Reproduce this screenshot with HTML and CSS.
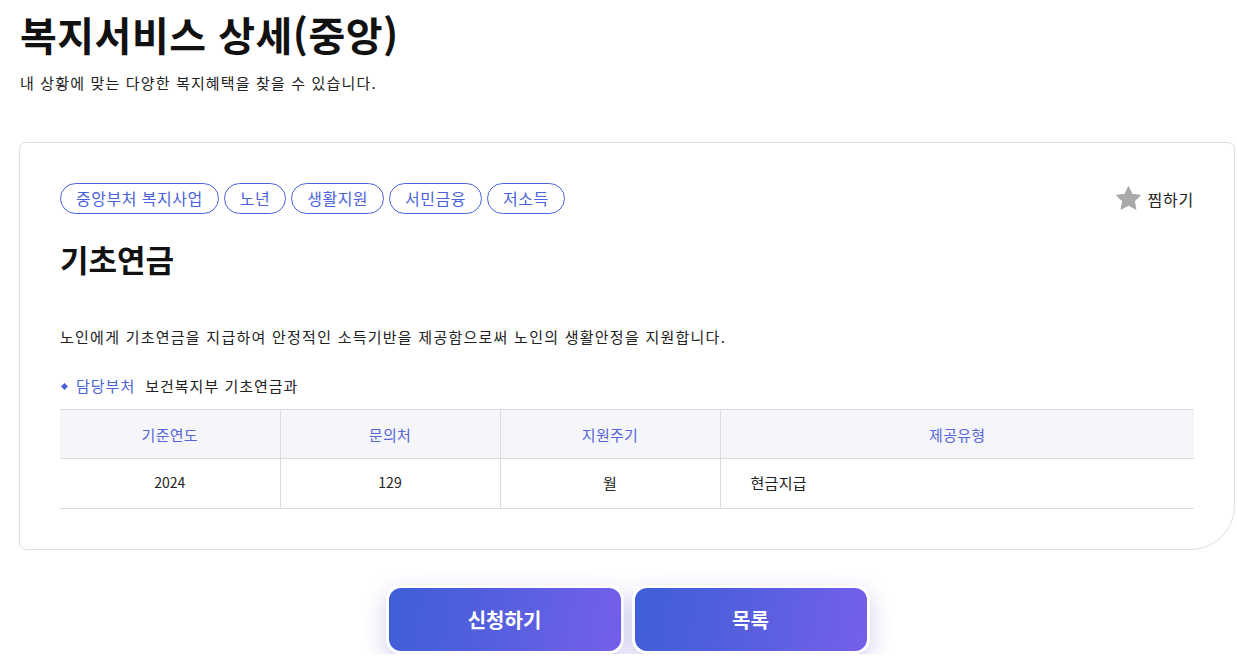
FILE: index.html
```html
<!DOCTYPE html>
<html lang="ko">
<head>
<meta charset="utf-8">
<link rel="stylesheet" href="styles.css">
</head>
<body>
<div class="page">
  <header class="page-head">
    <h1 class="page-title">복지서비스 상세(중앙)</h1>
    <p class="page-sub">내 상황에 맞는 다양한 복지혜택을 찾을 수 있습니다.</p>
  </header>

  <section class="card">
    <div class="card-top">
      <ul class="tags">
        <li class="tag">중앙부처 복지사업</li>
        <li class="tag">노년</li>
        <li class="tag">생활지원</li>
        <li class="tag">서민금융</li>
        <li class="tag">저소득</li>
      </ul>
      <button class="fav">
        <svg class="fav-icon" viewBox="0 0 24 24" width="27" height="27"><path d="M12 1.8l3.1 6.6 7.1.9-5.2 4.9 1.4 7.1L12 17.8l-6.4 3.5 1.4-7.1L1.8 9.3l7.1-.9z" fill="#a9a9a9" stroke="#a9a9a9" stroke-width="1.2" stroke-linejoin="round"/></svg>
        <span>찜하기</span>
      </button>
    </div>
    <h2 class="svc-title">기초연금</h2>
    <p class="svc-desc">노인에게 기초연금을 지급하여 안정적인 소득기반을 제공함으로써 노인의 생활안정을 지원합니다.</p>
    <p class="dept"><span class="dept-label">담당부처</span><span class="dept-value">보건복지부 기초연금과</span></p>
    <table class="info">
      <thead>
        <tr><th>기준연도</th><th>문의처</th><th>지원주기</th><th>제공유형</th></tr>
      </thead>
      <tbody>
        <tr><td>2024</td><td>129</td><td class="ko">월</td><td class="ko left">현금지급</td></tr>
      </tbody>
    </table>
  </section>

  <div class="actions">
    <button class="btn">신청하기</button>
    <button class="btn">목록</button>
  </div>
</div>
</body>
</html>
```

FILE: styles.css
```css
* { box-sizing: border-box; }
html, body { margin: 0; padding: 0; background: #fff; }
body {
  font-family: "Noto Sans CJK KR", "Noto Sans", sans-serif;
  color: #111;
}
.page {
  width: 1216px;
  margin-left: 19px;
}
.page-head { padding-top: 6px; }
.page-title {
  margin: 0;
  font-size: 40px;
  font-weight: 700;
  letter-spacing: 0.5px;
  line-height: 56px;
  padding-left: 1px;
}
.page-sub {
  margin: 11px 0 0 1px;
  font-size: 15px;
  letter-spacing: 1.15px;
  line-height: 20px;
  color: #222;
}
.card {
  margin-top: 49px;
  border: 1px solid #dedede;
  border-radius: 7px 7px 44px 7px;
  padding: 40px 40px 40px 40px;
}
.card-top {
  display: flex;
  justify-content: space-between;
  align-items: center;
}
.tags {
  display: flex;
  gap: 5px;
  list-style: none;
  margin: 0;
  padding: 0;
}
.tag {
  height: 31px;
  border: 1px solid #4a63d9;
  border-radius: 16px;
  padding: 0 15px;
  font-size: 16px;
  letter-spacing: 0.5px;
  line-height: 29px;
  color: #4a63d9;
}
.fav {
  display: flex;
  align-items: center;
  gap: 5px;
  border: 0;
  background: none;
  padding: 0;
  font-family: inherit;
  font-size: 16px;
  letter-spacing: 0.8px;
  color: #222;
}
.svc-title {
  margin: 23px 0 0;
  font-size: 31px;
  font-weight: 700;
  letter-spacing: 0;
  line-height: 44px;
}
.svc-desc {
  margin: 45px 0 0;
  font-size: 15px;
  letter-spacing: 1.25px;
  line-height: 22px;
  color: #222;
}
.dept {
  display: flex;
  align-items: center;
  margin: 27px 0 0;
  font-size: 15px;
  letter-spacing: 1px;
  line-height: 22px;
}
.dept-label {
  position: relative;
  padding-left: 16px;
  color: #4a63d9;
  margin-right: 10px;
}
.dept-label::before {
  content: "";
  position: absolute;
  left: 2px;
  top: 9px;
  width: 5px;
  height: 5px;
  background: #4a63d9;
  transform: rotate(45deg);
}
.dept-value { color: #222; }
.info {
  width: 100%;
  margin-top: 12px;
  border-collapse: collapse;
  table-layout: fixed;
  font-size: 14px;
}
.info th, .info td {
  height: 50px;
  text-align: center;
  border-top: 1px solid #dcdcdc;
  border-bottom: 1px solid #dcdcdc;
  border-left: 1px solid #dcdcdc;
}
.info th { height: 49px; padding-bottom: 1px; }
.info td { padding-bottom: 4px; }
.info th:first-child, .info td:first-child { border-left: 0; }
.info th:nth-child(-n+3), .info td:nth-child(-n+3) { width: 220px; }
.info th {
  background: #f5f6fa;
  font-weight: 400;
  font-size: 15px;
  letter-spacing: 0.3px;
  color: #5865d8;
}
.info td { color: #222; }
.info td.ko { font-size: 15px; letter-spacing: 0.3px; }
.info td.left { text-align: left; padding-left: 30px; }
.actions {
  display: flex;
  justify-content: center;
  gap: 8px;
  margin-top: 35px;
  padding-left: 1px;
}
.btn {
  width: 238px;
  height: 69px;
  border: 3px solid #fff;
  border-radius: 15px;
  background: linear-gradient(100deg, #3e5fd6 0%, #5a5fe0 55%, #7560ea 100%);
  box-shadow: 0 8px 22px rgba(96, 90, 200, 0.3);
  color: #fff;
  font-family: inherit;
  font-size: 20px;
  font-weight: 700;
  letter-spacing: 0;
}
```
